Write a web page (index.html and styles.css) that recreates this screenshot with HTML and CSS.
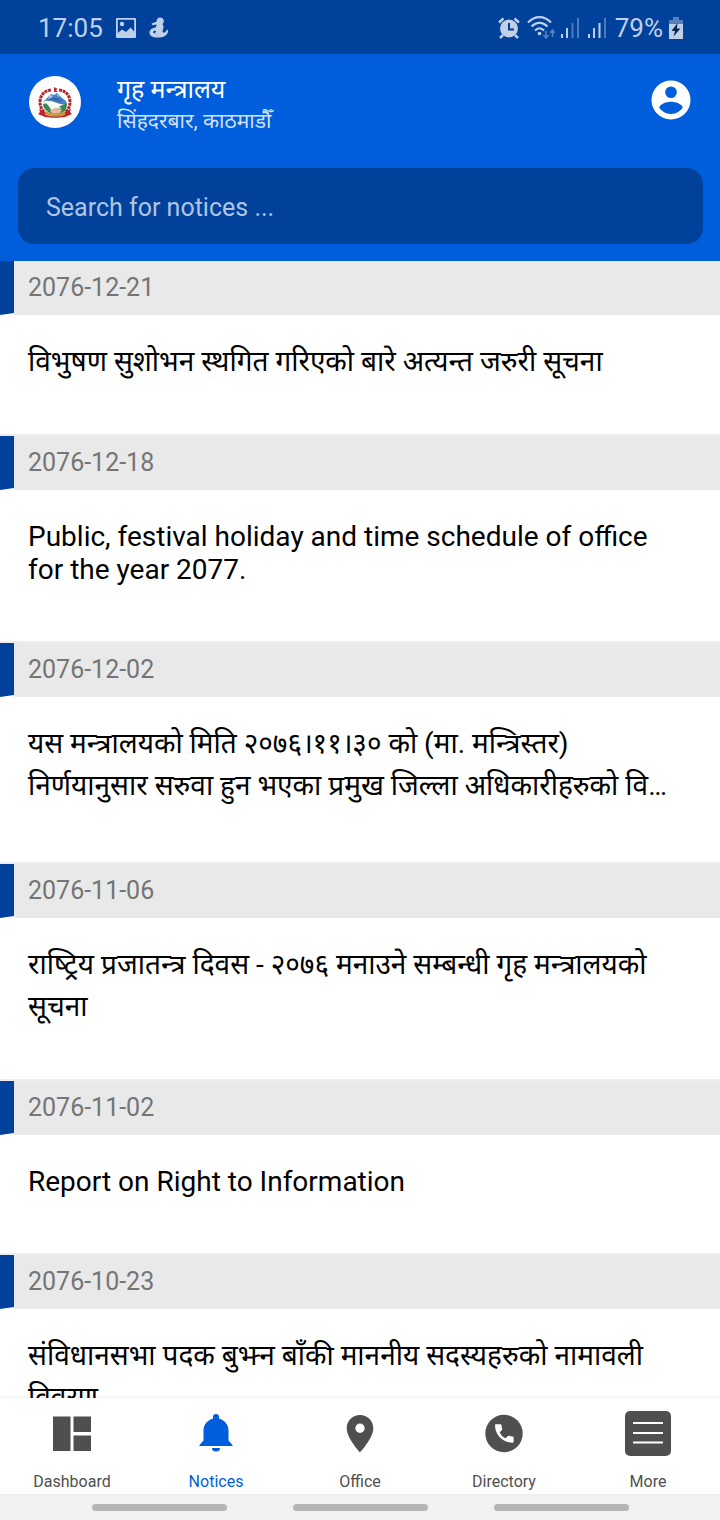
FILE: index.html
```html
<!DOCTYPE html>
<html lang="ne">
<head>
    <meta charset="UTF-8">
    <meta name="viewport" content="width=device-width, initial-scale=1.0">
    <title>Notices</title>
    <link rel="stylesheet" href="styles.css">
</head>
<body>

    <div class="status-bar">
        <span class="status-text">17:05</span>
        <svg class="icon-picture" width="22" height="22" viewBox="0 0 22 22">
            <path fill="currentColor" fill-rule="evenodd" d="M2 1h18a1 1 0 0 1 1 1v18a1 1 0 0 1-1 1H2a1 1 0 0 1-1-1V2a1 1 0 0 1 1-1zm.8 1.800v13.200l4.200-3.500 4 2.500 4.500-4.500 3.700 4V2.800z"/>
            <circle cx="7" cy="7" r="2.200" fill="currentColor"/>
        </svg>
        <svg class="icon-person" width="20" height="22" viewBox="0 0 20 22">
            <path fill="currentColor" d="M11 .5c2.400 0 3.800 1.500 3.800 3.500 0 1.300-.5 2.300-1.300 3 1 1.500 1.300 3 .8 4.500l-.8 3c.7 1.500 1.800 1.500 3 .2.700-.8 1-2.200 2.500-2 .8 3.800-3 7.800-8 7.800H6.500c-3.500 0-6-2.200-6-4.700C.5 12.500 3.500 11 6.500 10.500L8 7.500 3.500 8.200 2.500 6.500l5-1.800C7.500 2.200 8.800.5 11 .5z"/>
            <path fill="#00419b" d="M5 13.500l2 .5-1 2.500-2-1z"/>
        </svg>
        <svg class="icon-alarm" width="24" height="24" viewBox="0 0 24 24">
            <circle cx="12" cy="12.500" r="9" fill="currentColor"/>
            <path d="M2 6.500L6.500 2.500M22 6.500L17.500 2.500M6 19l-3 3M18 19l3 3" stroke="currentColor" stroke-width="2.500"/>
            <path d="M12 7v6.500h5" stroke="#00419b" stroke-width="2" fill="none"/>
        </svg>
        <svg width="28" height="24" viewBox="0 0 28 24">
            <g fill="none" stroke="currentColor" stroke-width="2.200">
                <path d="M1 6.500C8-.6 17-.6 24 6.500M4.500 10.500c5-5 11-5 16 0M8 14.500c3-3 6-3 9 0"/>
            </g>
            <circle cx="12.500" cy="17.500" r="1.800" fill="currentColor"/>
            <path d="M19 15v7m-2.500-3l2.500 3 2.500-3M25.500 21v-7m-2.300 3l2.300-3 2.300 3" fill="none" stroke="currentColor" stroke-width="1.600" opacity=".45"/>
        </svg>
        <svg class="icon-signal" width="18" height="22" viewBox="0 0 18 22" fill="currentColor">
            <path d="M0 17h2v4H0zM5 11h2v10H5z"/>
            <path d="M10.500 6h2v15h-2zM16 1h2v20h-2z" opacity=".4"/>
        </svg>
        <svg class="icon-signal" width="18" height="22" viewBox="0 0 18 22" fill="currentColor">
            <path d="M0 17h2v4H0zM5 11h2v10H5zM10.500 6h2v15h-2z"/>
            <path d="M16 1h2v20h-2z" opacity=".4"/>
        </svg>
        <span class="status-text">79%</span>
        <svg width="14" height="22" viewBox="0 0 14 22">
            <path fill="currentColor" opacity=".45" d="M4 0h6v3h4v4H0V3h4z"/>
            <path fill="currentColor" d="M0 7h14v15H0z"/>
            <path fill="#0c2550" d="M8.500 6L2.500 14H6l-1.500 5.500 7-8H8z"/>
        </svg>
    </div>

    <header class="header">
        <div class="profile">
            <svg class="logo" viewBox="0 0 52 52">
                <circle cx="26" cy="26" r="26" fill="#fff"/>
                <path fill="#4a82bd" d="M14 26l5-5 3-3 3 1 3-2 4 4 5 4 1 4-7-1-9-3z"/>
                <path fill="#2f6cb5" d="M18 23l5-2 6 1 5 3-4 1-6-2z"/>
                <path fill="#a9cbe6" d="M21 19l3 1-2 2-3 1zM28 18l3 3-3-1z"/>
                <path fill="#3c8751" d="M14 28c4-2 7 0 10 2s8 0 14-3c0 6-2 9-6 10H21c-4-2-7-5-7-9z"/>
                <path fill="#f6f8f2" d="M15 25c6-1 8 2 12 4 3 1 5 2 5 4-4-1-8 0-10 1-1-3-4-6-7-9z"/>
                <path fill="#e8b79b" d="M21 34l6-2 6 2-3 4h-7z"/>
                <path fill="none" stroke="#b5262d" stroke-width="3" stroke-dasharray="3 .7" d="M15 36C8 29 10 15 22 14M37 36c7-7 5-21-7-22"/>
                <path fill="#c8283c" d="M25 11l4 2-2 1 2 2h-4z"/>
                <path fill="#c39a45" d="M16 35c6 3 14 3 20 0l1 4c-7 3-15 3-22 0z"/>
                <path fill="#c3222c" d="M10 33l6 3v3c6 2 14 2 20 0v-3l6-3-1 3 2 2-7 3c-6 1-14 1-20 0l-7-3 2-2z"/>
                <path fill="#c39a45" d="M17 36.500c6 2 12 2 18 0v2c-6 1.500-12 1.500-18 0z"/>
            </svg>
            <div class="office">
                <h1 class="office-name">गृह मन्त्रालय</h1>
                <p class="office-place">सिंहदरबार, काठमाडौँ</p>
            </div>
            <button type="button" class="account-btn" aria-label="Account">
                <svg width="40" height="40" viewBox="0 0 40 40">
                    <path fill="#fff" fill-rule="evenodd" d="M20 .5a19.500 19.500 0 1 0 0 39 19.500 19.500 0 0 0 0-39zm0 5.900a5.850 5.850 0 1 1 0 11.700 5.850 5.850 0 0 1 0-11.700zm0 27.600c-4.900 0-9.200-2.500-11.700-6.200.1-3.900 7.800-6 11.700-6s11.600 2.100 11.700 6C29.200 31.500 24.900 34 20 34z"/>
                </svg>
            </button>
        </div>
        <input type="search" class="search" placeholder="Search for notices ..." aria-label="Search for notices">
    </header>

    <main class="notices">
        <article class="notice">
            <div class="notice-head"><time class="notice-date">2076-12-21</time></div>
            <p class="notice-title">विभुषण सुशोभन स्थगित गरिएको बारे अत्यन्त जरुरी सूचना</p>
        </article>

        <article class="notice">
            <div class="notice-head"><time class="notice-date">2076-12-18</time></div>
            <p class="notice-title english" lang="en">Public, festival holiday and time schedule of office for the year 2077.</p>
        </article>

        <article class="notice">
            <div class="notice-head"><time class="notice-date">2076-12-02</time></div>
            <p class="notice-title shortened">यस मन्त्रालयको मिति २०७६।११।३० को (मा. मन्त्रिस्तर) निर्णयानुसार सरुवा हुन भएका प्रमुख जिल्ला अधिकारीहरुको वि…</p>
        </article>

        <article class="notice">
            <div class="notice-head"><time class="notice-date">2076-11-06</time></div>
            <p class="notice-title" lang="hi">राष्&zwj;ट्रिय प्रजातन्त्र दिवस - २०७६ मनाउने सम्बन्धी गृह मन्त्रालयको सूचना</p>
        </article>

        <article class="notice">
            <div class="notice-head"><time class="notice-date">2076-11-02</time></div>
            <p class="notice-title english" lang="en">Report on Right to Information</p>
        </article>

        <article class="notice">
            <div class="notice-head"><time class="notice-date">2076-10-23</time></div>
            <p class="notice-title">संविधानसभा पदक बुझ्न बाँकी माननीय सदस्यहरुको नामावली विवरण</p>
        </article>
    </main>

    <nav class="tabs">
        <a href="#dashboard" class="tab">
            <svg width="46" height="46" viewBox="0 0 46 46" fill="currentColor">
                <path d="M4 5.500h17.500V40H4zM24.500 5.500H42V21H24.500zM24.500 24.500H42V40H24.500z"/>
            </svg>
            Dashboard
        </a>
        <a href="#notices" class="tab active" aria-current="page">
            <svg width="46" height="46" viewBox="0 0 46 46" fill="currentColor">
                <path d="M23 3a3 3 0 0 1 3 3v1.400c5.500 1.500 9.500 6 9.500 12.100v10l4 4.500v1h-33v-1l4-4.500v-10c0-6.100 4-10.600 9.500-12.100V6a3 3 0 0 1 3-3zM19 37h8a4 3.500 0 0 1-8 0z"/>
            </svg>
            Notices
        </a>
        <a href="#office" class="tab">
            <svg width="46" height="46" viewBox="0 0 46 46" fill="currentColor">
                <path fill-rule="evenodd" d="M23 4c-7.400 0-13.300 5.900-13.300 13.300C9.700 27.300 23 41.500 23 41.500s13.300-14.200 13.300-24.200C36.300 9.900 30.400 4 23 4zm0 8.600a4.700 4.700 0 1 1 0 9.400 4.700 4.700 0 0 1 0-9.400z"/>
            </svg>
            Office
        </a>
        <a href="#directory" class="tab">
            <svg width="46" height="46" viewBox="0 0 46 46">
                <circle cx="23" cy="22.500" r="18.700" fill="currentColor"/>
                <path fill="#fff" d="M14.900 13.300h4.700q.9 0 .9.900c0 1.500.3 2.500.7 3.700q.2.600-.3 1.100l-2.200 2.400c1.400 2.700 3.100 4.500 5.800 5.900l2.400-2.200q.5-.5 1.100-.3c1.200.4 2.300.6 3.700.6q.9 0 .9.900v4.500q0 .9-.9.900C21.800 31.700 14 24 14 14.200q0-.9.900-.9z"/>
            </svg>
            Directory
        </a>
        <a href="#more" class="tab">
            <svg width="46" height="46" viewBox="0 0 46 46">
                <rect x="0" y="0" width="46" height="45" rx="5" fill="currentColor"/>
                <path d="M8 12h30M8 22h30M8 31.500h30" stroke="#fff" stroke-width="2"/>
            </svg>
            More
        </a>
    </nav>

    <div class="system-bar">
        <span class="handle"></span>
        <span class="handle"></span>
        <span class="handle"></span>
    </div>

</body>
</html>
```

FILE: styles.css
```css
* {
    box-sizing: border-box;
}
body {
    margin: 0;
    height: 100vh;
    display: flex;
    flex-direction: column;
    font-family: Roboto, "Noto Sans", "Noto Sans Devanagari", sans-serif;
    background-color: #ffffff;
    color: #000000;
}
.status-bar {
    flex: none;
    height: 54px;
    padding: 2px 37px 0 38px;
    display: flex;
    align-items: center;
    gap: 6px;
    background: #00419b;
    color: #c0d0e8;
}
.status-text {
    font-size: 26px;
    line-height: 32px;
}
.icon-picture {
    margin-left: 6px;
}
.icon-person {
    margin-left: 6px;
}
.icon-alarm {
    margin-left: auto;
}
.icon-signal {
    margin-right: 3px;
}
.header {
    flex: none;
    padding: 22px 17px 17px 18px;
    background: #005edc;
    color: white;
}
.profile {
    display: flex;
    align-items: center;
    padding: 0 12px 0 11px;
    height: 52px;
    margin-bottom: 40px;
}
.logo {
    width: 52px;
    height: 52px;
}
.office {
    flex: 1;
    margin-left: 36px;
    padding-top: 6px;
}
.office-name {
    margin: 0;
    font-size: 25px;
    font-weight: normal;
    line-height: 32px;
}
.office-place {
    margin: 0;
    font-size: 21px;
    line-height: 30px;
    color: #cfe0f8;
}
.account-btn {
    display: flex;
    padding: 0 0 4px;
    border: none;
    background: none;
    cursor: pointer;
}
.search {
    display: block;
    width: 100%;
    height: 76px;
    padding: 2px 28px 0;
    border: none;
    border-radius: 16px;
    background: #00419b;
    color: white;
    font-family: inherit;
    font-size: 25px;
}
.search::placeholder {
    color: #b0c5e2;
}
.notices {
    flex: 1;
    min-height: 0;
    overflow-y: auto;
    scrollbar-width: none;
}
.notice {
    border-bottom: 2px solid #eeeeee;
}
.notice-head {
    display: flex;
    height: 54px;
}
.notice-head::before {
    content: "";
    width: 14px;
    background: #00419b;
    clip-path: polygon(0 0, 100% 0, 100% 52px, 0 100%);
}
.notice-date {
    flex: 1;
    padding-left: 14px;
    background: #e9e9e9;
    color: #757575;
    font-size: 25px;
    line-height: 54px;
}
.notice-title {
    margin: 0;
    padding: 26px 48px 51px 28px;
    font-size: 28px;
    line-height: 42px;
}
.notice-title.english {
    padding-top: 30px;
    padding-bottom: 55px;
    line-height: 33px;
}
.notice-title.shortened {
    padding-bottom: 55px;
}
.tabs {
    flex: none;
    position: relative;
    display: flex;
    height: 96px;
    background: white;
    box-shadow: 0 -1px 3px rgba(0, 0, 0, 0.08);
}
.tab {
    flex: 1;
    display: flex;
    flex-direction: column;
    align-items: center;
    gap: 15px;
    padding-top: 13px;
    color: #4f4f4f;
    font-size: 16px;
    line-height: 20px;
    text-decoration: none;
}
.tab.active {
    color: #005edc;
}
.system-bar {
    flex: none;
    height: 26px;
    display: flex;
    justify-content: center;
    align-items: center;
    gap: 66px;
    background: #f1f1f1;
}
.handle {
    width: 135px;
    height: 7px;
    border-radius: 4px;
    background: #b5b5b5;
}
```
